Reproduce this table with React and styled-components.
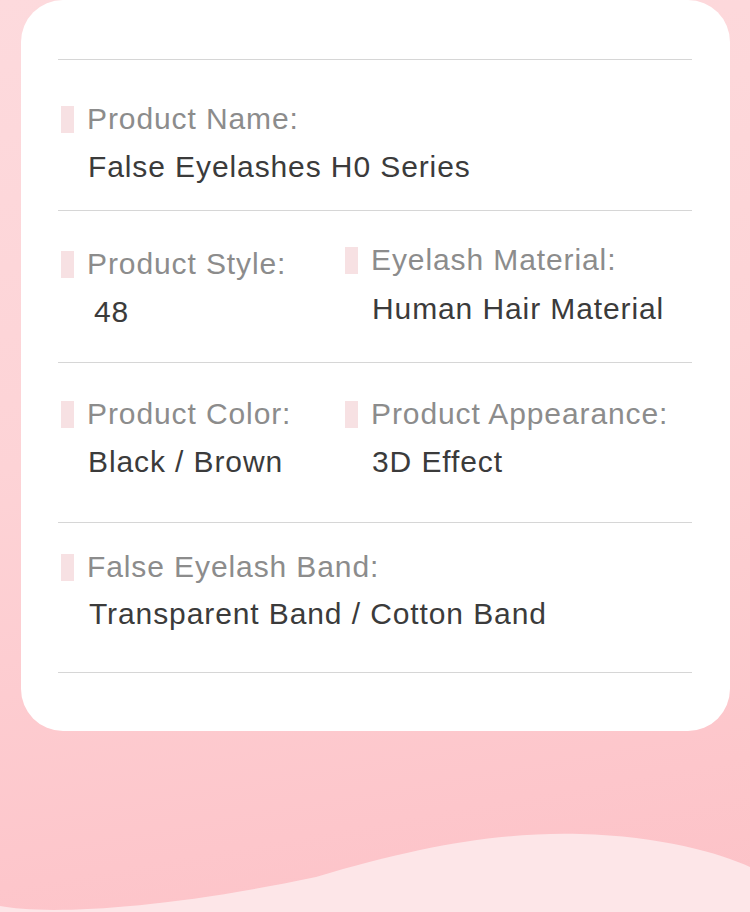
import React from "react";
import styled, { createGlobalStyle } from "styled-components";

const Global = createGlobalStyle`
  html, body { margin: 0; padding: 0; }
  body { font-family: "Liberation Sans", Arial, sans-serif; }
`;

const Page = styled.div`
  position: relative;
  width: 750px;
  height: 912px;
  overflow: hidden;
  background: linear-gradient(170deg, #fddadd 0%, #fdd3d6 45%, #fdc6cb 85%, #fcc2c7 100%);
`;

const Wave = styled.svg`
  position: absolute;
  left: 0;
  bottom: 0;
  display: block;
`;

const Card = styled.div`
  position: relative;
  z-index: 1;
  margin-left: 21px;
  width: 709px;
  height: 731px;
  box-sizing: border-box;
  background: #ffffff;
  border-radius: 42px;
  padding: 59px 38px 0 37px;
`;

const List = styled.div`
  border-top: 1px solid #d6d6d6;
`;

const Section = styled.div`
  box-sizing: border-box;
  height: ${(p) => p.$h}px;
  border-bottom: 1px solid #d6d6d6;
  display: grid;
  grid-template-columns: ${(p) => (p.$cols === 2 ? "284px 1fr" : "1fr")};
  padding-left: 3px;
`;

const Field = styled.div`
  padding-top: ${(p) => p.$pt}px;
  display: flex;
  flex-direction: column;
  gap: ${(p) => p.$gap}px;
`;

const Label = styled.div`
  display: flex;
  align-items: center;
  gap: 13px;
  font-size: 30px;
  line-height: 36px;
  letter-spacing: 0.9px;
  color: #8c8c8c;
  white-space: nowrap;
`;

const Marker = styled.span`
  flex: none;
  width: 13px;
  height: 27px;
  background: #f7e1e3;
`;

const Value = styled.div`
  padding-left: ${(p) => 27 + (p.$shift || 0)}px;
  font-size: 30px;
  line-height: 36px;
  letter-spacing: 0.9px;
  color: #3b3b3b;
  white-space: nowrap;
`;

const Item = ({ label, value, pt, gap, shift }) => (
  <Field $pt={pt} $gap={gap}>
    <Label>
      <Marker />
      {label}
    </Label>
    <Value $shift={shift}>{value}</Value>
  </Field>
);

export default function App() {
  return (
    <>
      <Global />
      <Page>
        <Wave width="750" height="90" viewBox="0 822 750 90" preserveAspectRatio="none">
          <path
            d="M0,906 C40,914 150,912 316,877 C420,846 500,832 580,834 C660,836 720,853 750,867 L750,912 L0,912 Z"
            fill="#fde6e8"
          />
        </Wave>
        <Card>
          <List>
            <Section $h={151} $cols={1}>
              <Item label="Product Name:" value="False Eyelashes H0 Series" pt={41} gap={12} />
            </Section>
            <Section $h={152} $cols={2}>
              <Item label="Product Style:" value="48" pt={35} gap={12} shift={6} />
              <Item label="Eyelash Material:" value="Human Hair Material" pt={31} gap={13} />
            </Section>
            <Section $h={160} $cols={2}>
              <Item label="Product Color:" value="Black / Brown" pt={33} gap={12} />
              <Item label="Product Appearance:" value="3D Effect" pt={33} gap={12} />
            </Section>
            <Section $h={150} $cols={1}>
              <Item label="False Eyelash Band:" value="Transparent Band / Cotton Band" pt={26} gap={11} shift={1} />
            </Section>
          </List>
        </Card>
      </Page>
    </>
  );
}
